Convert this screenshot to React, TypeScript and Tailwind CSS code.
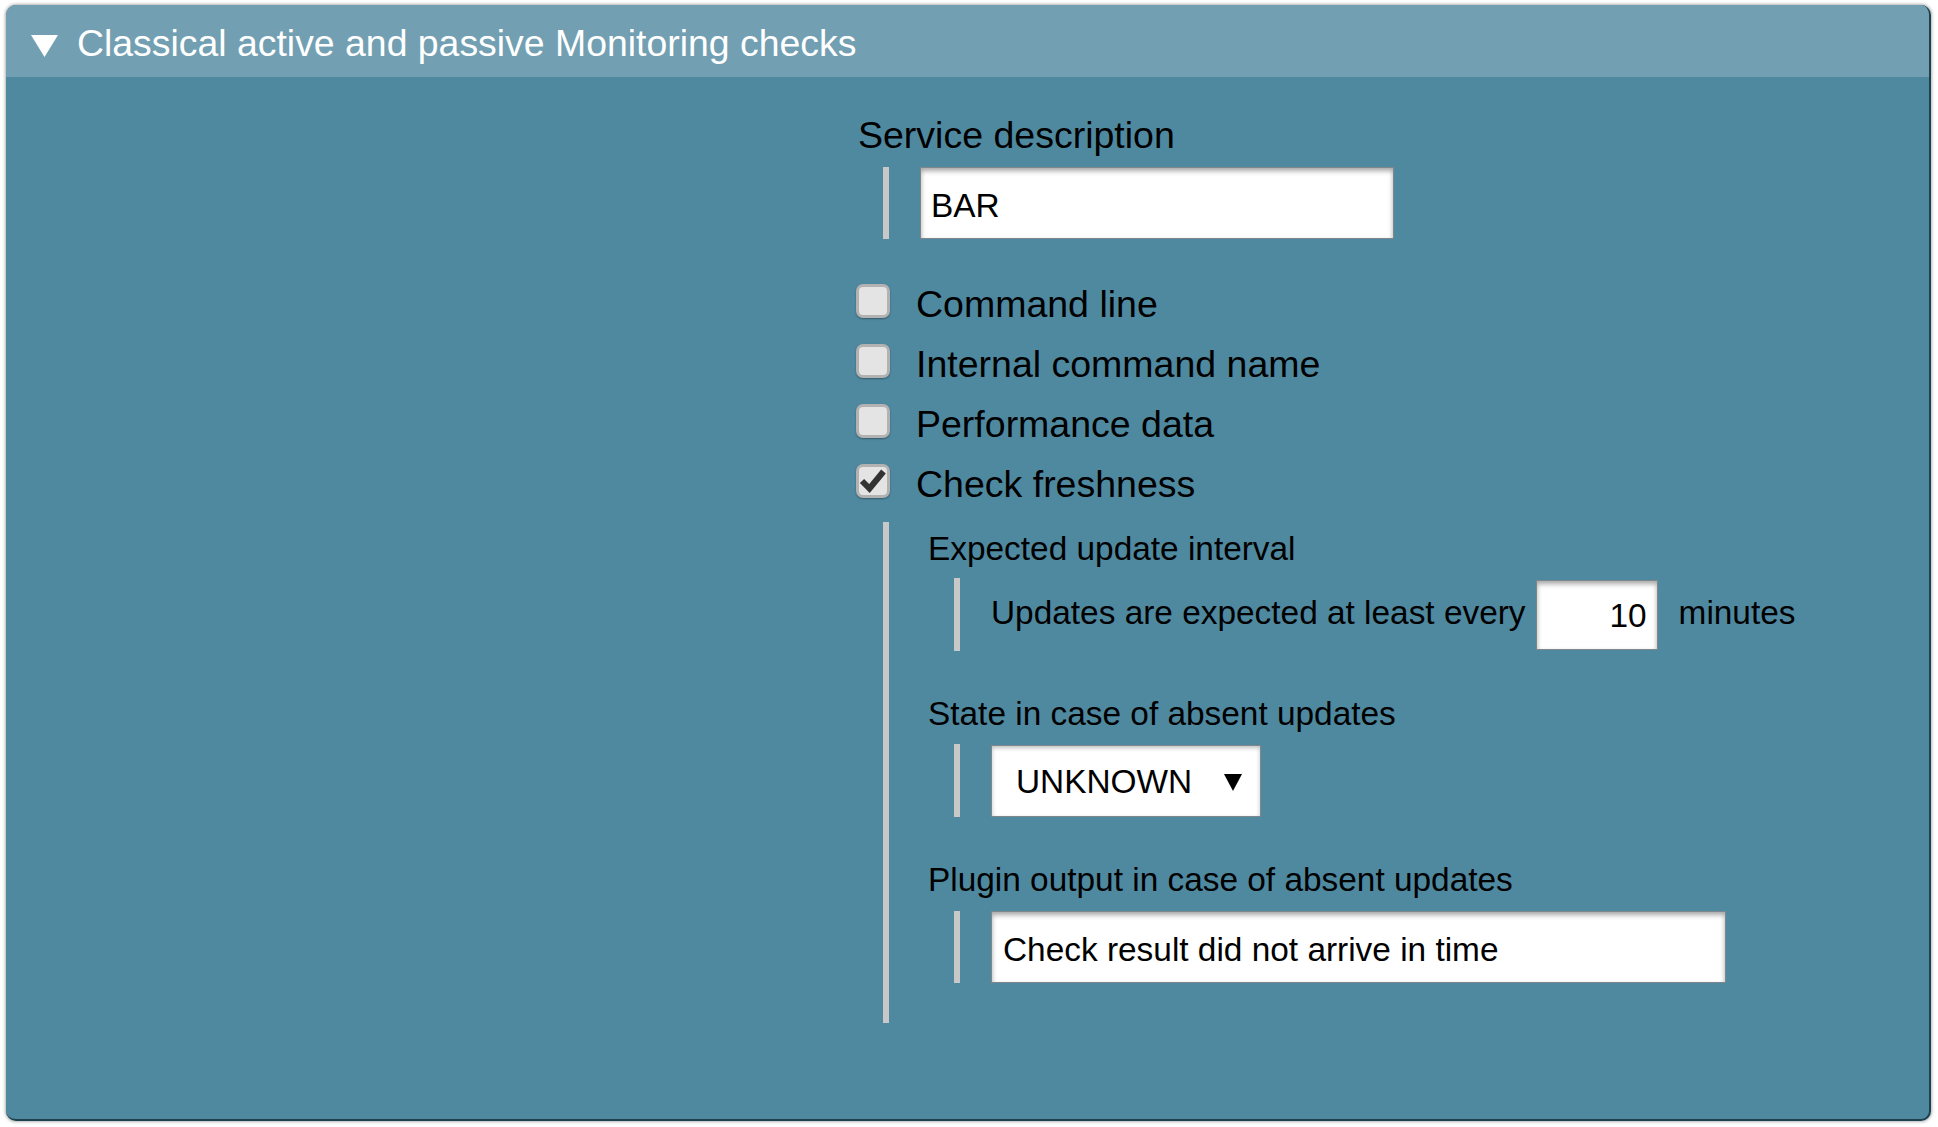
import { useState } from "react"

type Option = { id: string; label: string }

const options: Option[] = [
  { id: "command_line", label: "Command line" },
  { id: "command_name", label: "Internal command name" },
  { id: "perf_data", label: "Performance data" },
  { id: "freshness", label: "Check freshness" },
]

function Checkbox({ checked, onClick }: { checked: boolean; onClick: () => void }) {
  return (
    <button
      onClick={onClick}
      className="w-[34px] h-[34px] shrink-0 -ml-[2px] -mt-[2px] rounded-[7px] border-[3px] border-[#b2b2b2] bg-[#e4e4e4] shadow-[0_1px_2px_rgba(0,0,0,0.35)] flex items-center justify-center"
    >
      {checked && (
        <svg viewBox="0 0 28 28" className="w-[28px] h-[28px]">
          <path d="M3 14 L10.5 21.5 L24.5 4.5" fill="none" stroke="#333" strokeWidth="6" strokeLinejoin="miter" />
        </svg>
      )}
    </button>
  )
}

function Indent({ children, className = "" }: { children: React.ReactNode; className?: string }) {
  // grey bar on the left, as the nested valuespecs have
  return (
    <div className={`flex items-center border-l-[6px] border-[#c8c8c8] pl-[31px] ${className}`}>
      {children}
    </div>
  )
}

export default function App() {
  const [checked, setChecked] = useState<Record<string, boolean>>({ freshness: true })

  const toggle = (id: string) => setChecked((prev) => ({ ...prev, [id]: !prev[id] }))

  return (
    <div className="min-h-screen bg-white font-['Liberation_Sans',Arial,sans-serif] text-black">
      <div className="ml-[6px] mt-[5px] w-[1925px] h-[1116px] flex flex-col rounded-[10px] overflow-hidden bg-[#4f89a0] border-r-2 border-b-2 border-[#1c4250] shadow-[0_0_3px_1px_rgba(0,0,0,0.3)]">
        {/* Header */}
        <div className="h-[72px] shrink-0 bg-[#72a0b2] flex items-center">
          <svg viewBox="0 0 27 22" className="ml-[25px] mt-[10px] w-[27px] h-[22px]">
            <polygon points="0,0 27,0 13.5,22" fill="#fff" />
          </svg>
          <span className="ml-[19px] mt-[5px] text-[37.4px] leading-none text-white">
            Classical active and passive Monitoring checks
          </span>
        </div>

        {/* Body */}
        <div className="flex-1 pl-[852px] pt-[37px]">
          <div className="text-[37.5px] leading-[42px]">Service description</div>
          <Indent className="ml-[25px] mt-[11px] h-[72px]">
            <input
              readOnly
              value="BAR"
              className="w-[474px] h-[72px] bg-white border border-[#7d878c] shadow-[inset_0_3px_5px_rgba(0,0,0,0.35)] pt-[6px] px-[10px] text-[33.4px] text-black outline-none"
            />
          </Indent>

          <div className="mt-[33px]">
            {options.map((opt) => (
              <div key={opt.id} className="h-[60px] flex items-center">
                <Checkbox checked={!!checked[opt.id]} onClick={() => toggle(opt.id)} />
                <span className="ml-[26px] pt-[6px] text-[37.5px] leading-none">{opt.label}</span>
              </div>
            ))}
          </div>

          {checked.freshness && (
            <div className="ml-[25px] mt-[10px] border-l-[6px] border-[#c8c8c8] pl-[39px] pt-[8px] pb-[40px] text-[33.4px]">
              <div className="leading-[38px]">Expected update interval</div>
              <Indent className="ml-[26px] mt-[10px] h-[73px]">
                <span className="leading-none pb-[4px]">Updates are expected at least every</span>
                <input
                  readOnly
                  value="10"
                  className="ml-[10px] w-[122px] h-[70px] bg-white border border-[#7d878c] shadow-[inset_0_3px_5px_rgba(0,0,0,0.35)] pt-[3px] pr-[10px] text-right text-[33.4px] text-black outline-none"
                />
                <span className="ml-[21px] leading-none pb-[4px]">minutes</span>
              </Indent>

              <div className="mt-[44px] leading-[38px]">State in case of absent updates</div>
              <Indent className="ml-[26px] mt-[11px] h-[73px]">
                <div className="w-[270px] h-[72px] bg-white border border-[#7d878c] shadow-[inset_0_2px_4px_rgba(0,0,0,0.25)] flex items-center pl-[24px] pt-[2px]">
                  <span className="leading-none">UNKNOWN</span>
                  <svg viewBox="0 0 18 18" className="ml-[32px] w-[18px] h-[18px]">
                    <polygon points="0,1 18,1 9,18" fill="#000" />
                  </svg>
                </div>
              </Indent>

              <div className="mt-[44px] leading-[38px]">Plugin output in case of absent updates</div>
              <Indent className="ml-[26px] mt-[12px] h-[72px]">
                <input
                  readOnly
                  value="Check result did not arrive in time"
                  className="w-[735px] h-[72px] bg-white border border-[#7d878c] shadow-[inset_0_3px_5px_rgba(0,0,0,0.35)] pt-[6px] px-[11px] text-[33.4px] text-black outline-none"
                />
              </Indent>
            </div>
          )}
        </div>
      </div>
    </div>
  )
}
